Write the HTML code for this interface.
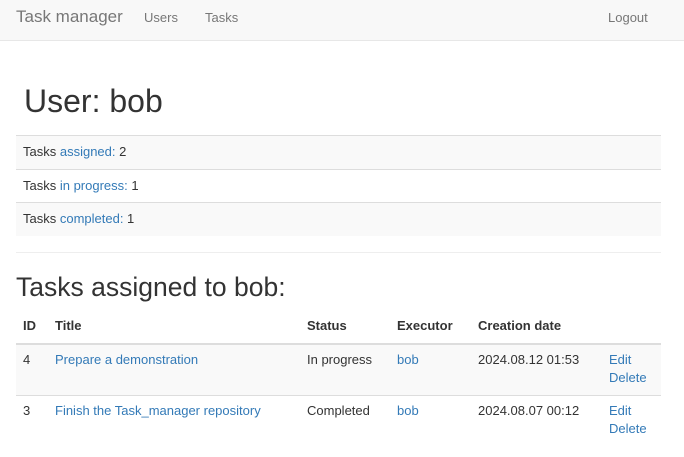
<!DOCTYPE html>
<html><head><meta charset="utf-8"><style>
*{box-sizing:border-box}
body{margin:0;font-family:"Liberation Sans",Arial,sans-serif;font-size:13px;line-height:18px;color:#333;background:#fff}
a{color:#337ab7;text-decoration:none}
.nav{height:41px;background:#f8f8f8;border-bottom:1px solid #e7e7e7;position:relative;color:#777}
.nav span{position:absolute;top:9px}
.brand{left:16px;font-size:17px;top:8px!important}
h1{position:absolute;left:24px;top:81px;margin:0;font-size:32px;font-weight:normal;line-height:40px}
.list{position:absolute;left:16px;top:135px;width:645px}
.list div{height:33.5px;border-top:1px solid #ddd;padding:7px 7px}
.list div:nth-child(odd){background:#f9f9f9}
hr{position:absolute;left:16px;top:252px;width:645px;margin:0;border:0;border-top:1px solid #eee}
h2{position:absolute;left:16px;top:271px;margin:0;font-size:26.5px;font-weight:normal;line-height:32px}
table{position:absolute;left:16px;top:309px;width:645px;border-collapse:collapse;table-layout:fixed}
th,td{padding:8px 7px;text-align:left;vertical-align:top}
th{border-bottom:2px solid #ddd;font-weight:bold;height:34px}
td{border-top:1px solid #ddd;height:51px;padding-top:6px}
tbody tr:nth-child(odd){background:#f9f9f9}
</style></head><body>
<div class="nav"><span class="brand">Task manager</span><span style="left:144px">Users</span><span style="left:205px">Tasks</span><span style="left:608px">Logout</span></div>
<h1>User: bob</h1>
<div class="list">
<div>Tasks <a>assigned:</a> 2</div>
<div>Tasks <a>in progress:</a> 1</div>
<div>Tasks <a>completed:</a> 1</div>
</div>
<hr>
<h2>Tasks assigned to bob:</h2>
<table>
<colgroup><col style="width:32px"><col style="width:252px"><col style="width:90px"><col style="width:81px"><col style="width:131px"><col style="width:59px"></colgroup>
<thead><tr><th>ID</th><th>Title</th><th>Status</th><th>Executor</th><th>Creation date</th><th></th></tr></thead>
<tbody>
<tr><td>4</td><td><a>Prepare a demonstration</a></td><td>In progress</td><td><a>bob</a></td><td>2024.08.12 01:53</td><td><a>Edit</a><br><a>Delete</a></td></tr>
<tr style="background:#fff"><td>3</td><td><a>Finish the Task_manager repository</a></td><td>Completed</td><td><a>bob</a></td><td>2024.08.07 00:12</td><td><a>Edit</a><br><a>Delete</a></td></tr>
</tbody></table>
</body></html>
